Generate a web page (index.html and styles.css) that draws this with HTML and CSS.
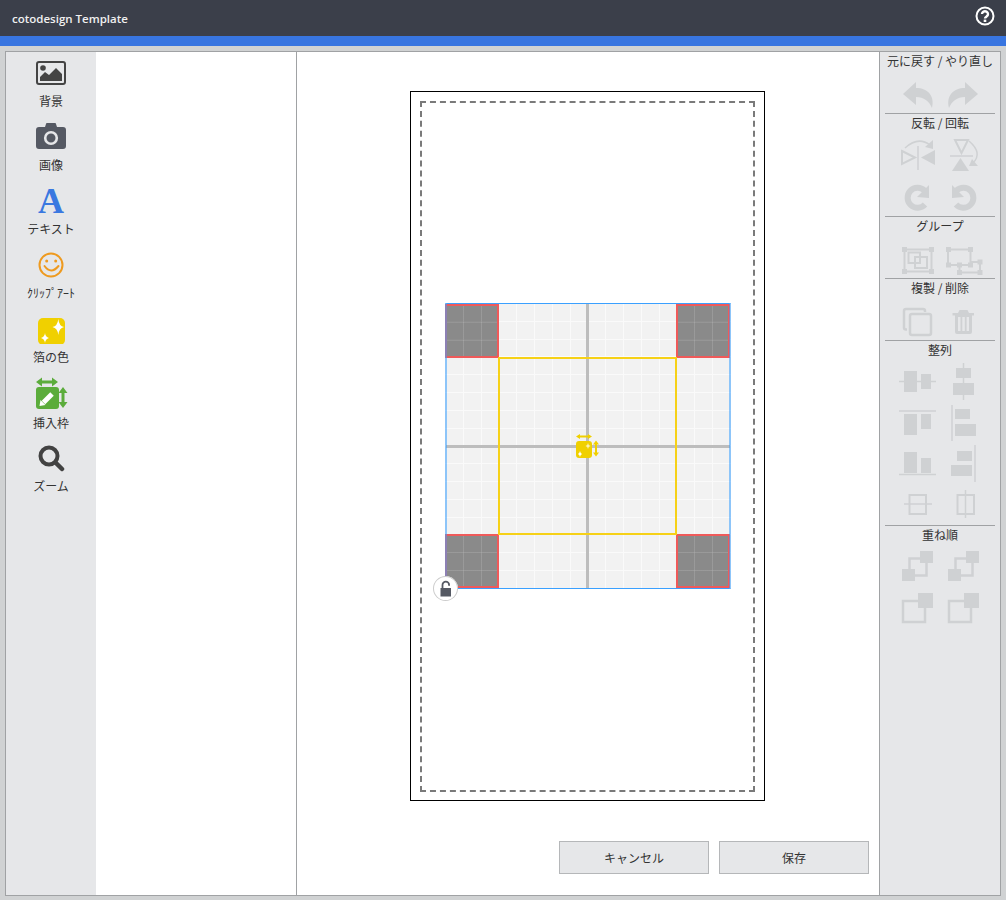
FILE: index.html
```html
<!DOCTYPE html>
<html lang="ja">
<head>
    <meta charset="UTF-8">
    <title>cotodesign Template</title>
    <link rel="stylesheet" href="styles.css">
</head>
<body>
<!--ヘッダー-->
<header class="app-header">
    <span class="app-title">cotodesign Template</span>
    <svg class="help-icon" width="22" height="22" viewBox="0 0 22 22">
        <circle cx="11" cy="11" r="8.5" fill="none" stroke="#fff" stroke-width="2"/>
        <path d="M8 9 a3 2.8 0 1 1 4.6 2.4 c-1.2.8-1.6 1.2-1.6 2.2" fill="none" stroke="#fff" stroke-width="2.4"/>
        <rect x="9.7" y="14.6" width="2.6" height="2.4" fill="#fff"/>
    </svg>
</header>
<div class="accent-bar"></div>

<main class="editor">
    <!--左のツール-->
    <nav class="tools">
        <div class="tool">
            <svg class="tool-icon" viewBox="0 0 40 32">
                <rect x="6" y="6" width="28" height="22" rx="2" fill="none" stroke="#444" stroke-width="2"/>
                <circle cx="12" cy="12" r="2.8" fill="#444"/>
                <path d="M9 25 V21 L14 16 L18 19 L25 12 L31 18 V25 Z" fill="#444"/>
            </svg>
            <span class="tool-label">背景</span>
        </div>
        <div class="tool">
            <svg class="tool-icon" viewBox="0 0 40 32">
                <path d="M8 7 h6 l1 -3 a1 1 0 0 1 1 -1 h8 a1 1 0 0 1 1 1 l1 3 h6 a3 3 0 0 1 3 3 v16 a3 3 0 0 1 -3 3 h-24 a3 3 0 0 1 -3 -3 v-16 a3 3 0 0 1 3 -3 Z" fill="#555963"/>
                <circle cx="20" cy="18" r="5.8" fill="none" stroke="#e6e7e9" stroke-width="2.6"/>
            </svg>
            <span class="tool-label">画像</span>
        </div>
        <div class="tool">
            <span class="tool-letter">A</span>
            <span class="tool-label">テキスト</span>
        </div>
        <div class="tool">
            <svg class="tool-icon" viewBox="0 0 40 32">
                <circle cx="20" cy="17" r="11.5" fill="none" stroke="#ee9a1f" stroke-width="2"/>
                <circle cx="15.7" cy="13" r="1.5" fill="#ee9a1f"/>
                <circle cx="24.7" cy="13" r="1.5" fill="#ee9a1f"/>
                <path d="M13.5 18 Q20 27 27.5 18" fill="none" stroke="#ee9a1f" stroke-width="2" stroke-linecap="round"/>
            </svg>
            <span class="tool-label">ｸﾘｯﾌﾟｱｰﾄ</span>
        </div>
        <div class="tool">
            <svg class="tool-icon" viewBox="0 0 40 32">
                <rect x="7" y="6" width="27" height="27" rx="5" fill="#f0d000"/>
                <path d="M27.3 7 Q28 14 33 15 Q28 16 27.3 23 Q26.6 16 21.5 15 Q26.6 14 27.3 7 Z" fill="#fff"/>
                <path d="M14 21 Q14.4 25 18 26 Q14.4 27 14 31 Q13.6 27 10 26 Q13.6 25 14 21 Z" fill="#fff"/>
            </svg>
            <span class="tool-label">箔の色</span>
        </div>
        <div class="tool tool-frame">
            <svg class="tool-icon" viewBox="0 0 40 36">
                <rect x="5" y="11" width="23" height="22" rx="3" fill="#5bac3b"/>
                <path d="M8 6 H24" stroke="#5bac3b" stroke-width="3"/>
                <path d="M11 1.500 L5 6 L11 10.500 Z M21 1.500 L27 6 L21 10.500 Z" fill="#5bac3b"/>
                <path d="M32 15 V28" stroke="#5bac3b" stroke-width="3"/>
                <path d="M27.500 17 L32 11 L36.500 17 Z M27.500 26 L32 32 L36.500 26 Z" fill="#5bac3b"/>
                <path d="M12.500 26.500 L21 18" stroke="#fff" stroke-width="5"/>
                <path d="M8.500 30 L9.500 24 L14.500 29 Z" fill="#fff"/>
            </svg>
            <span class="tool-label">挿入枠</span>
        </div>
        <div class="tool tool-zoom">
            <svg class="tool-icon" viewBox="0 0 40 32">
                <circle cx="18" cy="16" r="8.500" fill="none" stroke="#424242" stroke-width="4"/>
                <path d="M24.500 22.500 L31 29" stroke="#424242" stroke-width="4.500" stroke-linecap="round"/>
            </svg>
            <span class="tool-label">ズーム</span>
        </div>
    </nav>

    <!--素材パネル-->
    <aside class="panel"></aside>

    <!--キャンバス-->
    <section class="stage">
        <div class="artboard">
            <div class="safe-line"></div>
            <div class="design">
                <div class="corner corner-tl"></div>
                <div class="corner corner-tr"></div>
                <div class="corner corner-bl"></div>
                <div class="corner corner-br"></div>
                <div class="guide-v"></div>
                <div class="guide-h"></div>
                <div class="foil-rect"></div>
                <svg class="foil-mark" viewBox="0 0 26 26">
                    <rect x="2" y="7" width="16" height="17" rx="3" fill="#f0d000"/>
                    <path d="M4 2.500 H16" stroke="#f0d000" stroke-width="2"/>
                    <path d="M6 0 L2 2.500 L6 5 Z M14 0 L18 2.500 L14 5 Z" fill="#f0d000"/>
                    <path d="M22 9 V20" stroke="#f0d000" stroke-width="2"/>
                    <path d="M19 10.500 L22 6.500 L25 10.500 Z M19 18.500 L22 22.500 L25 18.500 Z" fill="#f0d000"/>
                    <path d="M14 9 Q14.300 11.500 16.500 12 Q14.300 12.500 14 15 Q13.700 12.500 11.500 12 Q13.700 11.500 14 9 Z" fill="#fff" opacity="0.7"/>
                    <path d="M6 17 Q6.300 19 8 20 Q6.300 21 6 23 Q5.700 21 4 20 Q5.700 19 6 17 Z" fill="#fff"/>
                </svg>
                <div class="lock">
                    <svg width="25" height="25" viewBox="0 0 25 25">
                        <rect x="7.500" y="12" width="10.500" height="8.500" fill="#555963"/>
                        <path d="M9.500 12 V9 a3.300 3.300 0 0 1 6.600 0 v0.800" fill="none" stroke="#555963" stroke-width="1.800"/>
                    </svg>
                </div>
            </div>
        </div>
        <div class="actions">
            <button class="action-btn">キャンセル</button>
            <button class="action-btn">保存</button>
        </div>
    </section>

    <!--右の操作-->
    <aside class="ops">
        <div class="ops-group">
            <div class="ops-title">元に戻す / やり直し</div>
            <div class="ops-grid">
                <svg class="op" viewBox="0 0 40 41"><path d="M6 22 L19 10 V16 C31 16 38 24 35 36 C32 29 27 25 19 25 V33 Z"/></svg>
                <svg class="op" viewBox="0 0 40 41"><path transform="matrix(-1 0 0 1 41 0)" d="M6 22 L19 10 V16 C31 16 38 24 35 36 C32 29 27 25 19 25 V33 Z"/></svg>
            </div>
        </div>
        <div class="ops-group">
            <div class="ops-title">反転 / 回転</div>
            <div class="ops-grid">
                <svg class="op" viewBox="0 0 40 41">
                    <path class="line-mid" d="M5 17 L18 23.500 L5 30 Z"/>
                    <path d="M38 16 L24 23.500 L38 31 Z"/>
                    <path class="line" d="M21 12 V36 M8 14 Q21 2 33 11"/>
                    <path d="M36 6 L36 15 L28 13 Z"/>
                </svg>
                <svg class="op" viewBox="0 0 40 41">
                    <path class="line-mid" d="M12 6 H25 L18.500 19 Z"/>
                    <path d="M9 37 L26 37 L17.500 24 Z"/>
                    <path class="line" d="M7 22 H30 M26 7 Q40 19 30 29"/>
                    <path d="M35 32 L26 32 L29 25 Z"/>
                </svg>
            </div>
            <div class="ops-grid">
                <svg class="op" viewBox="0 0 40 41">
                    <path class="line-bold" d="M28 29.500 A10 10 0 1 1 27.500 15.500"/>
                    <path d="M32 10 V23 L20 22 Z"/>
                </svg>
                <svg class="op" viewBox="0 0 40 41">
                    <g transform="matrix(-1 0 0 1 41 0)">
                        <path class="line-bold" d="M28 29.500 A10 10 0 1 1 27.500 15.500"/>
                        <path d="M32 10 V23 L20 22 Z"/>
                    </g>
                </svg>
            </div>
        </div>
        <div class="ops-group">
            <div class="ops-title">グループ</div>
            <div class="ops-grid">
                <svg class="op" viewBox="0 0 40 41">
                    <path class="line-mid" d="M7.500 12.500 H34.500 V34.500 H7.500 Z M11.500 15.500 H23 V26 H11.500 Z M18 20 H30 V31 H18 Z"/>
                    <path d="M5 10 h5 v5 h-5 Z M32 10 h5 v5 h-5 Z M5 32 h5 v5 h-5 Z M32 32 h5 v5 h-5 Z"/>
                </svg>
                <svg class="op" viewBox="0 0 40 41">
                    <path class="line-mid" d="M5 12.500 H27.500 V28 H5 Z M16.500 28 V35.500 H37 V25 H27.500"/>
                    <path d="M3 10 h5 v5 h-5 Z M25 10 h5 v5 h-5 Z M3 25.500 h5 v5 h-5 Z M25 25.500 h5 v5 h-5 Z M14 33 h5 v5 h-5 Z M34.500 33 h5 v5 h-5 Z M34.500 22.500 h5 v5 h-5 Z M14 25.500 h5 v5 h-5 Z"/>
                </svg>
            </div>
        </div>
        <div class="ops-group">
            <div class="ops-title">複製 / 削除</div>
            <div class="ops-grid">
                <svg class="op" viewBox="0 0 40 41">
                    <rect class="line-thick" x="13" y="15" width="21" height="21" rx="2"/>
                    <path class="line-thick" d="M10 30.500 H9 a2 2 0 0 1 -2 -2 V12 a2 2 0 0 1 2 -2 H26 a2 2 0 0 1 2 2 V13"/>
                </svg>
                <svg class="op" viewBox="0 0 40 41">
                    <path fill-rule="evenodd" d="M15 14 L16.500 11 H24.500 L26 14 H31 V16.500 H29 V33 a2 2 0 0 1 -2 2 H14 a2 2 0 0 1 -2 -2 V16.500 H9.500 V14 Z M15 18 V32 H17.500 V18 Z M19.300 18 V32 H21.800 V18 Z M23.600 18 V32 H26 V18 Z"/>
                </svg>
            </div>
        </div>
        <div class="ops-group">
            <div class="ops-title">整列</div>
            <div class="ops-grid">
                <svg class="op" viewBox="0 0 40 41">
                    <path class="line" d="M2 20.500 H39"/>
                    <rect x="7" y="10" width="13" height="21"/>
                    <rect x="24" y="13" width="10" height="15"/>
                </svg>
                <svg class="op" viewBox="0 0 40 41">
                    <path class="line" d="M20.500 2 V39"/>
                    <rect x="13" y="7" width="15" height="10"/>
                    <rect x="10" y="22" width="21" height="12"/>
                </svg>
            </div>
            <div class="ops-grid">
                <svg class="op" viewBox="0 0 40 41">
                    <path class="line" d="M2 9 H39"/>
                    <rect x="7" y="12" width="13" height="21"/>
                    <rect x="24" y="12" width="10" height="15"/>
                </svg>
                <svg class="op" viewBox="0 0 40 41">
                    <path class="line" d="M9 3 V39"/>
                    <rect x="12" y="7" width="15" height="10"/>
                    <rect x="12" y="22" width="21" height="12"/>
                </svg>
            </div>
            <div class="ops-grid">
                <svg class="op" viewBox="0 0 40 41">
                    <path class="line" d="M2 31.500 H39"/>
                    <rect x="7" y="9" width="13" height="21"/>
                    <rect x="24" y="15" width="10" height="15"/>
                </svg>
                <svg class="op" viewBox="0 0 40 41">
                    <path class="line" d="M32 2 V39"/>
                    <rect x="14" y="8" width="15" height="10"/>
                    <rect x="8" y="22" width="21" height="11"/>
                </svg>
            </div>
            <div class="ops-grid">
                <svg class="op" viewBox="0 0 40 41">
                    <path class="line-mid" d="M12.500 11 H29 V30 H12.500 Z"/>
                    <path class="line" d="M7 20 H35"/>
                </svg>
                <svg class="op" viewBox="0 0 40 41">
                    <path class="line-mid" d="M14.500 11 H31 V30 H14.500 Z"/>
                    <path class="line" d="M22.500 6 V34"/>
                </svg>
            </div>
        </div>
        <div class="ops-group ops-group-last">
            <div class="ops-title">重ね順</div>
            <div class="ops-grid">
                <svg class="op" viewBox="0 0 40 41">
                    <path class="line-thick" d="M12.500 12.500 H29.500 V29.500 H12.500 Z"/>
                    <rect x="23" y="5" width="13" height="12"/>
                    <rect x="5" y="23" width="13" height="12"/>
                </svg>
                <svg class="op" viewBox="0 0 40 41">
                    <path class="line-thick" d="M12.500 12.500 H29.500 V29.500 H12.500 Z"/>
                    <rect x="23" y="5" width="13" height="12"/>
                    <rect x="5" y="23" width="13" height="12"/>
                </svg>
            </div>
            <div class="ops-grid">
                <svg class="op" viewBox="0 0 40 41">
                    <path class="line-thick" d="M6 14 H28 V35 H6 Z"/>
                    <rect x="21" y="6" width="15" height="15"/>
                </svg>
                <svg class="op" viewBox="0 0 40 41">
                    <path class="line-thick" d="M6 14 H28 V35 H6 Z"/>
                    <rect x="21" y="6" width="15" height="15"/>
                </svg>
            </div>
        </div>
    </aside>
</main>
</body>
</html>
```

FILE: styles.css
```css
/*全体*/
html, body {
    margin: 0;
    height: 100%;
    overflow: hidden;
}

body {
    display: flex;
    flex-direction: column;
    background-color: #d0d2d3;
    font-family: "Noto Sans CJK JP", "Liberation Sans", sans-serif;
    font-size: 12px;
    color: #333;
}

/*ヘッダー*/
.app-header {
    height: 36px;
    flex: none;
    display: flex;
    align-items: center;
    justify-content: space-between;
    padding: 0 10px 0 12px;
    background-color: #3b3f4a;
}

.app-title {
    font-family: "Open Sans", sans-serif;
    font-size: 11.5px;
    font-weight: 600;
    color: #f0f0f0;
}

.help-icon {
    display: block;
    margin-top: -4px;
}

.accent-bar {
    height: 10px;
    flex: none;
    background-color: #3875e0;
}

/*エディタ本体*/
.editor {
    height: 843px;
    flex: none;
    margin: 5px 5px 0;
    display: flex;
    border: 1px solid #a0a2a4;
    background-color: #fff;
}

/*左のツール*/
.tools {
    width: 90px;
    flex: none;
    padding-top: 4px;
    box-sizing: border-box;
    background-color: #e6e7e9;
}

.tool {
    height: 64px;
    display: flex;
    flex-direction: column;
    align-items: center;
}

.tool-icon {
    display: block;
    width: 40px;
    height: 32px;
    flex: none;
}

.tool-frame .tool-icon {
    height: 36px;
}

.tool-letter {
    height: 31px;
    flex: none;
    margin-top: 1px;
    font-family: "Liberation Serif", serif;
    font-size: 36px;
    font-weight: bold;
    line-height: 32px;
    color: #3a78e0;
}

.tool-label {
    margin-top: 5px;
    line-height: 16px;
    white-space: nowrap;
}

.tool-frame .tool-label {
    margin-top: 3px;
}

.tool-zoom .tool-label {
    margin-top: 6px;
}

/*素材パネル*/
.panel {
    width: 200px;
    flex: none;
    border-right: 1px solid #a0a2a4;
}

/*キャンバス*/
.stage {
    width: 582px;
    flex: none;
    padding-top: 39px;
    box-sizing: border-box;
}

.artboard {
    position: relative;
    width: 355px;
    height: 710px;
    margin-left: 113px;
    box-sizing: border-box;
    border: 1px solid #000;
}

.safe-line {
    position: absolute;
    left: 9px;
    top: 9px;
    width: 335px;
    height: 691px;
    box-sizing: border-box;
    border: 2px dashed #7a7a7a;
}

.design {
    position: absolute;
    left: 34px;
    top: 211px;
    width: 286px;
    height: 286px;
    box-sizing: border-box;
    border: 1px solid transparent;
    background-color: #f2f2f2;
    background-image:
        repeating-linear-gradient(to right, transparent 0, transparent 16.8px, #fafafa 16.8px, #fafafa 17.8px),
        repeating-linear-gradient(to bottom, transparent 0, transparent 16.8px, #fafafa 16.8px, #fafafa 17.8px);
}

/*デザイン範囲の青い枠*/
.design::after {
    content: '';
    position: absolute;
    left: -1px;
    right: -1px;
    top: -1px;
    bottom: -1px;
    border-top: 1px solid #3aa0ff;
    border-bottom: 1px solid #3aa0ff;
    border-left: 2px solid rgba(58, 160, 255, 0.55);
    border-right: 2px solid rgba(58, 160, 255, 0.55);
}

.corner {
    position: absolute;
    width: 54px;
    height: 54px;
    box-sizing: border-box;
    border: 2px solid #ef5a5a;
    background-color: rgba(0, 0, 0, 0.43);
    background-image:
        repeating-linear-gradient(to right, transparent 0, transparent 15.8px, rgba(255, 255, 255, 0.1) 15.8px, rgba(255, 255, 255, 0.1) 16.8px, transparent 16.8px, transparent 17.8px),
        repeating-linear-gradient(to bottom, transparent 0, transparent 15.8px, rgba(255, 255, 255, 0.1) 15.8px, rgba(255, 255, 255, 0.1) 16.8px, transparent 16.8px, transparent 17.8px);
}

.corner-tl { left: -1px; top: 0; }
.corner-tr { right: 0; top: 0; }
.corner-bl { left: -1px; bottom: 0; }
.corner-br { right: 0; bottom: 0; }

.guide-v {
    position: absolute;
    left: 140px;
    top: 0;
    bottom: 0;
    width: 3px;
    background-color: #bdbdbd;
}

.guide-h {
    position: absolute;
    left: 0;
    right: 0;
    top: 141px;
    height: 3px;
    background-color: #bdbdbd;
}

.foil-rect {
    position: absolute;
    left: 52px;
    top: 53px;
    width: 179px;
    height: 178px;
    box-sizing: border-box;
    border: 2px solid #f6d117;
}

.foil-mark {
    position: absolute;
    left: 128px;
    top: 130px;
    width: 26px;
    height: 26px;
}

.lock {
    position: absolute;
    z-index: 1;
    left: -13px;
    top: 272px;
    width: 25px;
    height: 25px;
    box-sizing: border-box;
    border-radius: 50%;
    background-color: #fff;
    box-shadow: inset 0 0 0 1px #ccc;
}

.lock svg {
    display: block;
}

/*ボタン*/
.actions {
    display: flex;
    justify-content: flex-end;
    gap: 10px;
    margin-top: 40px;
    padding-right: 10px;
}

.action-btn {
    width: 150px;
    height: 33px;
    padding: 0;
    border: 1px solid #b5b7b9;
    background-color: #e6e7e9;
    font-family: inherit;
    font-size: 12px;
    color: #333;
}

/*右の操作*/
.ops {
    width: 121px;
    flex: none;
    box-sizing: border-box;
    border-left: 1px solid #a0a2a4;
    background-color: #e6e7e9;
}

.ops-group {
    position: relative;
    padding-bottom: 1px;
}

.ops-group::after {
    content: '';
    position: absolute;
    left: 5px;
    right: 5px;
    bottom: 0;
    height: 1px;
    background-color: #a0a2a4;
}

.ops-group-last::after {
    display: none;
}

.ops-title {
    height: 20px;
    line-height: 17px;
    text-align: center;
    white-space: nowrap;
}

.ops-grid {
    display: flex;
    justify-content: center;
    gap: 6px;
}

.op {
    display: block;
    width: 40px;
    height: 41px;
    fill: #cfd1d3;
}

.op .line {
    fill: none;
    stroke: #cfd1d3;
    stroke-width: 1.500;
}

.op .line-mid {
    fill: none;
    stroke: #cfd1d3;
    stroke-width: 2;
}

.op .line-thick {
    fill: none;
    stroke: #cfd1d3;
    stroke-width: 2.500;
}

.op .line-bold {
    fill: none;
    stroke: #cfd1d3;
    stroke-width: 6;
}
```
